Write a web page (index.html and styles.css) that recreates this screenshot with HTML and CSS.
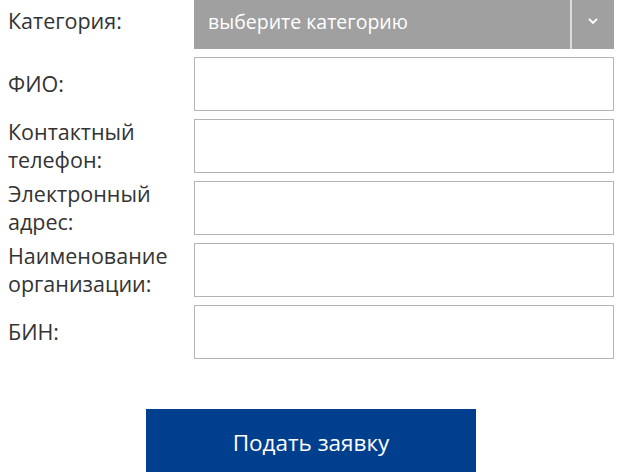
FILE: index.html
```html
<!DOCTYPE html>
<html lang="ru">
<head>
<meta charset="utf-8">
<title>Заявка</title>
<link rel="stylesheet" href="styles.css">
</head>
<body>
<form class="form">
  <div class="row row-select">
    <label class="label">Категория:</label>
    <div class="select">
      <span class="select-text">выберите категорию</span>
      <span class="select-arrow">
        <svg width="12" height="8" viewBox="0 0 12 8"><path d="M2 2 L6 6 L10 2" fill="none" stroke="#fff" stroke-width="1.8"/></svg>
      </span>
    </div>
  </div>
  <div class="row">
    <label class="label">ФИО:</label>
    <input class="input" type="text">
  </div>
  <div class="row">
    <label class="label">Контактный телефон:</label>
    <input class="input" type="text">
  </div>
  <div class="row">
    <label class="label">Электронный адрес:</label>
    <input class="input" type="text">
  </div>
  <div class="row">
    <label class="label">Наименование организации:</label>
    <input class="input" type="text">
  </div>
  <div class="row">
    <label class="label">БИН:</label>
    <input class="input" type="text">
  </div>
  <div class="actions">
    <button class="submit" type="button">Подать заявку</button>
  </div>
</form>
</body>
</html>
```

FILE: styles.css
```css
html, body {
  margin: 0;
  padding: 0;
  background: #fff;
}
body {
  padding: 0 0 0 8px;
  font-family: "Open Sans", "Liberation Sans", sans-serif;
  color: #333;
}
.form {
  width: 606px;
  margin-top: -7px;
  display: flex;
  flex-direction: column;
  gap: 8px;
}
.row {
  display: grid;
  grid-template-columns: 186px 420px;
  grid-template-rows: 54px;
  align-items: center;
}
.row-select {
  grid-template-rows: 56px;
}
.label {
  font-size: 21.5px;
  line-height: 28px;
  color: #333;
  padding-right: 10px;
}
.select {
  height: 56px;
  background: #a0a0a0;
  display: flex;
  align-items: stretch;
}
.select-text {
  flex: 1;
  display: flex;
  align-items: center;
  padding-left: 14px;
  font-size: 19.5px;
  color: #fff;
}
.select-arrow {
  width: 42px;
  border-left: 2px solid #dcdcdc;
  display: flex;
  align-items: center;
  justify-content: center;
}
.input {
  box-sizing: border-box;
  height: 54px;
  width: 420px;
  border: 1px solid #b4b4b4;
  background: #fff;
  margin: 0;
  padding: 0 10px;
  font-family: inherit;
  font-size: 18px;
  outline: none;
}
.actions {
  display: flex;
  justify-content: center;
  padding-top: 42px;
}
.submit {
  width: 330px;
  height: 66px;
  background: #003f8e;
  color: #fff;
  border: none;
  font-family: "Open Sans", "Liberation Sans", sans-serif;
  font-size: 22.5px;
  padding: 0;
  margin: 0;
}
```
